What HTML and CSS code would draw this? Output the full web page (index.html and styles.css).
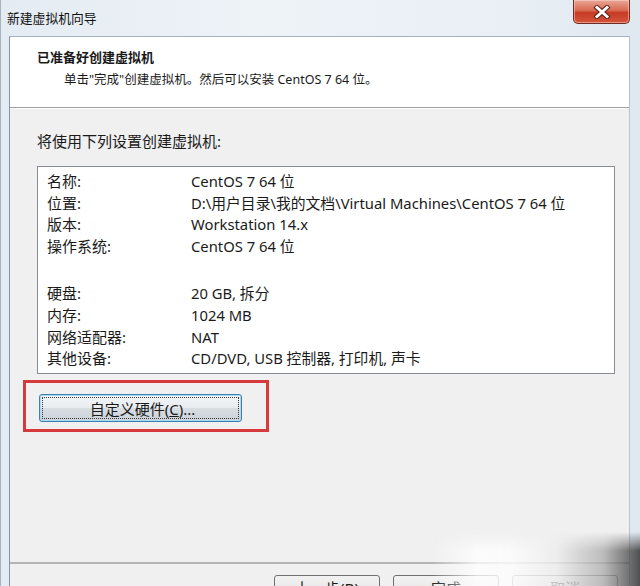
FILE: index.html
```html
<!DOCTYPE html>
<html lang="zh-CN">
<head>
  <meta charset="UTF-8" />
  <title>新建虚拟机向导</title>
  <link rel="stylesheet" href="styles.css">
</head>
<body>

  <div class="window">
    <div class="titlebar">
      <span class="caption">新建虚拟机向导</span>
      <div class="close">
        <svg width="20" height="14" viewBox="0 0 20 14">
          <path d="M5 2.5 L15 11.5 M15 2.5 L5 11.5" stroke="#5a2018" stroke-width="5" stroke-linecap="square"/>
          <path d="M5 2.5 L15 11.5 M15 2.5 L5 11.5" stroke="#fff" stroke-width="3" stroke-linecap="square"/>
        </svg>
      </div>
    </div>

    <div class="client">
      <!-- 上部の見出し -->
      <div class="header">
        <h1>已准备好创建虚拟机</h1>
        <p>单击"完成"创建虚拟机。然后可以安装 CentOS 7 64 位。</p>
      </div>

      <div class="content">
        <p class="intro">将使用下列设置创建虚拟机:</p>
        <div class="summary">
          <div class="row"><span>名称:</span><span>CentOS 7 64 位</span></div>
          <div class="row"><span>位置:</span><span>D:\用户目录\我的文档\Virtual Machines\CentOS 7 64 位</span></div>
          <div class="row"><span>版本:</span><span>Workstation 14.x</span></div>
          <div class="row"><span>操作系统:</span><span>CentOS 7 64 位</span></div>
          <div class="gap"></div>
          <div class="row"><span>硬盘:</span><span>20 GB, 拆分</span></div>
          <div class="row"><span>内存:</span><span>1024 MB</span></div>
          <div class="row"><span>网络适配器:</span><span>NAT</span></div>
          <div class="row"><span>其他设备:</span><span>CD/DVD, USB 控制器, 打印机, 声卡</span></div>
        </div>
        <div class="mark">
          <button class="custom">自定义硬件(<u>C</u>)...</button>
        </div>
      </div>

      <div class="footer">
        <button class="btn">上一步(<u>B</u>)</button>
        <button class="btn">完成</button>
        <button class="btn">取消</button>
      </div>
    </div>

    <div class="smear"></div>
  </div>

</body>
</html>
```

FILE: styles.css
```css
body {
  margin: 0;
  overflow: hidden;
  font-family: "Noto Sans", "Noto Sans CJK SC", sans-serif;
  color: #1a1a1a;
}

.window {
  position: relative;
  width: 640px;
  height: 586px;
  box-sizing: border-box;
  padding-left: 8px;
  padding-right: 10px;
  background: linear-gradient(90deg, #e4ebf2, #eef3f8 40%, #e9eff5 80%, #dfe7ef);
  border-left: 1px solid #a7b3bf;
  overflow: hidden;
}

.titlebar {
  height: 36px;
  display: flex;
  align-items: flex-start;
  justify-content: space-between;
}

.caption {
  font-size: 12.8px;
  line-height: 16px;
  margin-top: 10px;
  margin-left: -2px;
  color: #111;
}

.close {
  width: 57px;
  height: 24px;
  box-sizing: border-box;
  border: 1px solid #6e2b22;
  border-top: none;
  border-radius: 0 0 5px 5px;
  background: linear-gradient(#e9a898, #d86b52 45%, #c73a24 55%, #d4553b);
  display: flex;
  align-items: center;
  justify-content: center;
  box-shadow: inset 0 0 0 1px rgba(255, 220, 210, 0.5);
}

.client {
  height: 550px;
  border-left: 1px solid #8494a6;
  border-right: 1px solid #b9c4d0;
  border-top: 1px solid #a4b2c2;
  background: #f0f0f0;
  display: flex;
  flex-direction: column;
  overflow: hidden;
}

.header {
  flex-shrink: 0;
  height: 71px;
  background: #fff;
  border-bottom: 1px solid #a0a0a0;
  box-sizing: border-box;
  padding: 10px 0 0 27px;
}

.header h1 {
  margin: 0;
  font-size: 13px;
  line-height: 20px;
  font-weight: bold;
}

.header p {
  margin: 3px 0 0 27px;
  font-size: 12.5px;
  line-height: 20px;
}

.content {
  flex-shrink: 0;
  height: 454px;
  box-sizing: border-box;
  border-top: 1px solid #fff;
  padding-top: 22px;
}

.intro {
  margin: 0 0 15px 27px;
  font-size: 15px;
  line-height: 20px;
}

.summary {
  margin-left: 27px;
  width: 578px;
  height: 208px;
  box-sizing: border-box;
  background: #fff;
  border: 1px solid #878b92;
  padding: 4px 0 0 9px;
  font-size: 15px;
}

.row {
  display: grid;
  grid-template-columns: 144px 1fr;
  line-height: 21.7px;
  white-space: nowrap;
}

.row span:last-child {
  font-size: 14.8px;
}

.gap {
  height: 25.3px;
}

.mark {
  margin: 6px 0 0 13px;
  width: 246px;
  height: 52px;
  box-sizing: border-box;
  border: 3px solid #d63a3c;
  padding: 11px 0 0 13px;
}

.custom {
  display: block;
  margin: 0;
  width: 203px;
  height: 28px;
  border: 1px solid #3c7fb1;
  border-radius: 3px;
  background: linear-gradient(#f4f7f9, #e8ecef 48%, #d8dde2 52%, #ccd3d9);
  box-shadow: inset 0 0 0 1px #a9d8f2;
  outline: 1px dotted #333;
  outline-offset: -4px;
  font-family: inherit;
  font-size: 15px;
  color: #1a1a1a;
  padding: 0 0 0 4px;
}

.footer {
  flex: 1;
  border-top: 2px solid #b4b4b4;
  display: flex;
  justify-content: flex-end;
  align-items: flex-start;
  gap: 13px;
  padding: 11px 11px 0 0;
}

.btn {
  flex-shrink: 0;
  width: 106px;
  height: 24px;
  margin: 0;
  border: 1px solid #707070;
  border-radius: 3px;
  background: linear-gradient(#f2f2f2, #ebebeb 48%, #dddddd 52%, #cfcfcf);
  font-family: inherit;
  font-size: 15px;
  color: #1a1a1a;
  padding: 0;
}

/* 透かしの跡 */
.smear {
  position: absolute;
  left: 430px;
  top: 532px;
  width: 210px;
  height: 54px;
  background: linear-gradient(90deg, rgba(255,255,255,0), rgba(255,255,255,0.75) 22%, rgba(252,252,252,0.85) 38%, rgba(236,236,236,0.8) 60%, rgba(170,170,170,0.75) 82%, rgba(70,70,70,0.8) 96%, rgba(50,50,50,0.85));
  -webkit-mask-image: linear-gradient(rgba(0,0,0,0), #000 35%);
  mask-image: linear-gradient(rgba(0,0,0,0), #000 35%);
}
```
